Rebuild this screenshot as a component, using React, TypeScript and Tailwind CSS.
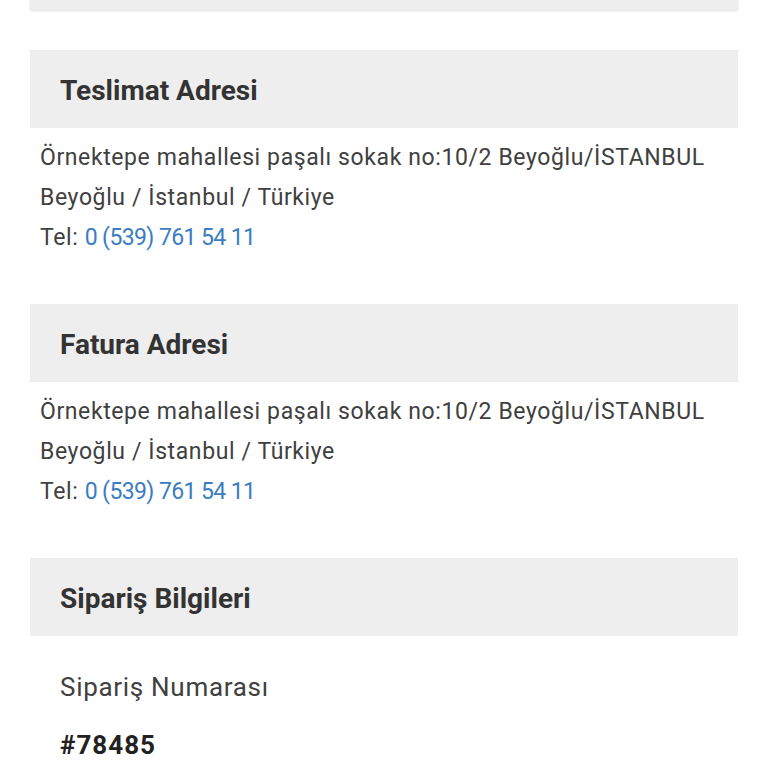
const address = {
  line1: 'Örnektepe mahallesi paşalı sokak no:10/2 Beyoğlu/İSTANBUL',
  line2: 'Beyoğlu / İstanbul / Türkiye',
  phone: '0 (539) 761 54 11',
};

const SectionHeader = ({ title }: { title: string }) => (
  <div className="h-[78px] bg-[#eeeeee] flex items-center px-[30px] pt-[4px]">
    <h2 className="text-[28px] font-bold text-[#333333]">{title}</h2>
  </div>
);

const AddressBlock = ({ title }: { title: string }) => (
  <div className="mb-[46px]">
    <SectionHeader title={title} />
    <div className="pt-[10px] px-[10px] text-[23px] leading-[40px] tracking-[0.6px] text-[#404040]">
      <p>{address.line1}</p>
      <p>{address.line2}</p>
      <p>
        Tel: <a className="text-[#3b7dc0] tracking-[-0.6px]">{address.phone}</a>
      </p>
    </div>
  </div>
);

export default function App() {
  return (
    <div className="min-h-screen bg-white px-[30px]" style={{ fontFamily: 'Roboto, "Noto Sans", sans-serif' }}>
      <div className="h-[10px] bg-[#eeeeee] mb-[40px] shadow-sm" />
      <AddressBlock title="Teslimat Adresi" />
      <AddressBlock title="Fatura Adresi" />
      <div>
        <SectionHeader title="Sipariş Bilgileri" />
        <div className="px-[30px] pt-[35px]">
          <p className="text-[26px] leading-[32px] tracking-[0.7px] text-[#404040]">Sipariş Numarası</p>
          <p className="mt-[26px] text-[26px] leading-[32px] tracking-[1px] font-bold text-[#222222]">#78485</p>
        </div>
      </div>
    </div>
  );
}
